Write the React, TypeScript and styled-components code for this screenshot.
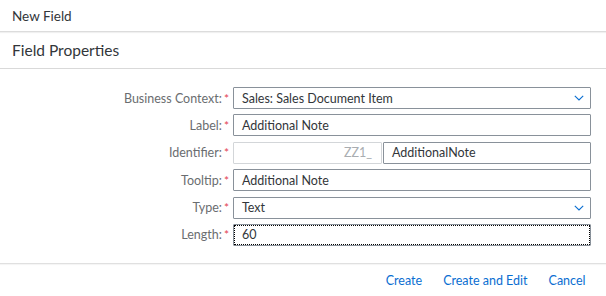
import React from 'react';
import styled, { createGlobalStyle } from 'styled-components';

const GlobalStyle = createGlobalStyle`
  html, body {
    margin: 0;
    padding: 0;
    background: #ffffff;
  }
  body {
    font-family: Lato, 'Liberation Sans', Arial, sans-serif;
    color: #32363a;
  }
`;

type FieldRow = {
  label: string;
  value: string;
  kind?: 'select' | 'identifier' | 'focused';
  prefix?: string;
};

const rows: FieldRow[] = [
  { label: 'Business Context:', value: 'Sales: Sales Document Item', kind: 'select' },
  { label: 'Label:', value: 'Additional Note' },
  { label: 'Identifier:', value: 'AdditionalNote', kind: 'identifier', prefix: 'ZZ1_' },
  { label: 'Tooltip:', value: 'Additional Note' },
  { label: 'Type:', value: 'Text', kind: 'select' },
  { label: 'Length:', value: '60', kind: 'focused' },
];

const Chevron = () => (
  <svg width="10" height="6" viewBox="0 0 10 6" fill="none">
    <path d="M0.8 0.8l4.2 4.2 4.2-4.2" stroke="#0a6ed1" strokeWidth="1.1" />
  </svg>
);

const App = () => (
  <Dialog>
    <GlobalStyle />
    <Header>New Field</Header>
    <SectionTitle>Field Properties</SectionTitle>
    <Form>
      {rows.map((row) => (
        <React.Fragment key={row.label}>
          <Label>
            {row.label}
            <Required>*</Required>
          </Label>
          {row.kind === 'identifier' ? (
            <IdentifierGroup>
              <InputBox disabled>
                <Prefix>{row.prefix}</Prefix>
              </InputBox>
              <InputBox>{row.value}</InputBox>
            </IdentifierGroup>
          ) : (
            <InputBox focused={row.kind === 'focused'}>
              <span>{row.value}</span>
              {row.kind === 'select' && (
                <ArrowSlot>
                  <Chevron />
                </ArrowSlot>
              )}
            </InputBox>
          )}
        </React.Fragment>
      ))}
    </Form>
    <Footer>
      <FooterButton>Create</FooterButton>
      <FooterButton>Create and Edit</FooterButton>
      <FooterButton>Cancel</FooterButton>
    </Footer>
  </Dialog>
);

const Dialog = styled.div`
  width: 606px;
  height: 296px;
  background: #ffffff;
  display: flex;
  flex-direction: column;
  overflow: hidden;
`;

const Header = styled.div`
  height: 31px;
  display: flex;
  align-items: center;
  padding: 0 12px;
  font-size: 13.5px;
  color: #32363a;
  border-bottom: 1px solid #dcdcdc;
  box-shadow: 0 1px 1px rgba(0, 0, 0, 0.06);
`;

const SectionTitle = styled.div`
  height: 36px;
  display: flex;
  align-items: center;
  padding: 0 12px;
  font-size: 15.5px;
  color: #32363a;
  border-bottom: 1px solid #d9d9d9;
`;

const Form = styled.div`
  display: grid;
  grid-template-columns: 229px 358px;
  column-gap: 4px;
  row-gap: 5.4px;
  padding: 18px 0 17px;
  border-bottom: 1px solid #e0e0e0;
  box-shadow: 0 1px 1px rgba(0, 0, 0, 0.04);
`;

const Label = styled.div`
  height: 22px;
  display: flex;
  align-items: center;
  justify-content: flex-end;
  font-size: 12.5px;
  color: #6a6d70;
`;

const Required = styled.span`
  color: #e34352;
  margin-left: 2px;
  font-size: 12px;
`;

const InputBox = styled.div<{ disabled?: boolean; focused?: boolean }>`
  flex: 1;
  height: 22px;
  box-sizing: border-box;
  display: flex;
  align-items: center;
  justify-content: space-between;
  padding: 0 8px;
  font-size: 12.5px;
  color: #32363a;
  background: #ffffff;
  border: 1px solid ${({ disabled }) => (disabled ? '#d3d6d9' : '#89919a')};
  border-radius: 1px;
  outline: ${({ focused }) => (focused ? '1px dotted #000' : 'none')};
  outline-offset: -2px;
`;

const IdentifierGroup = styled.div`
  display: flex;
  gap: 1px;
  & > :first-child {
    flex: 0 0 149px;
    justify-content: flex-end;
  }
`;

const Prefix = styled.span`
  color: #a9adb1;
  margin-right: 1px;
`;

const ArrowSlot = styled.span`
  display: flex;
  align-items: center;
  margin-right: -2px;
`;

const Footer = styled.div`
  flex: 1;
  display: flex;
  justify-content: flex-end;
  align-items: center;
  padding-right: 10px;
  padding-top: 2px;
`;

const FooterButton = styled.button`
  background: none;
  border: none;
  padding: 0 10.5px;
  font-family: inherit;
  font-size: 12.5px;
  color: #0a6ed1;
  cursor: pointer;
`;

export default App;
